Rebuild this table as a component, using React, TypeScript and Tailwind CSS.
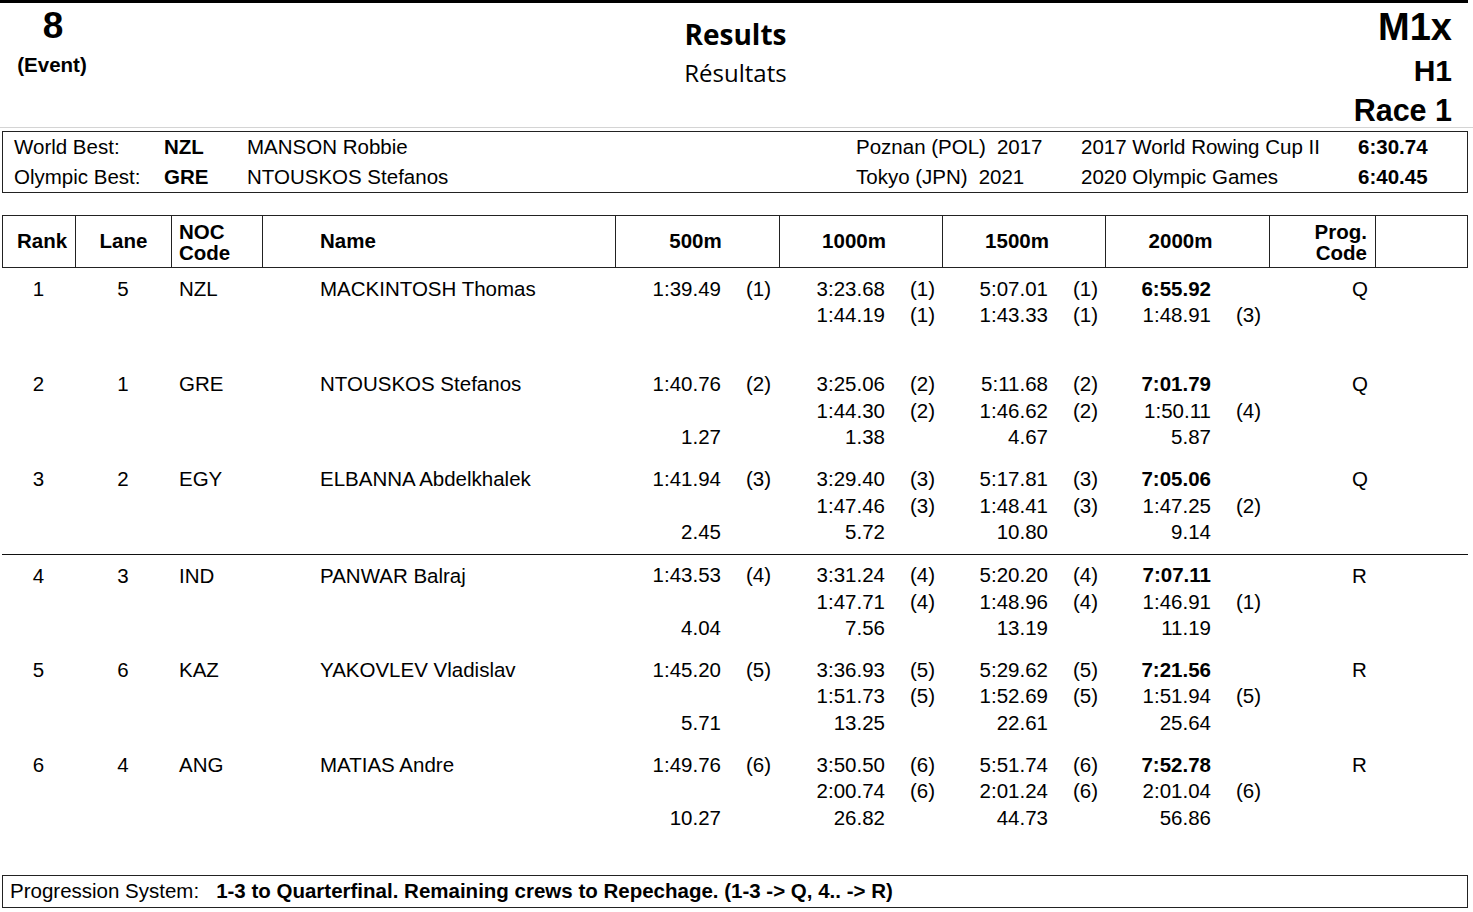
import React from 'react';

type Split = { time: string; rank?: string };
type Row = {
  rank: string;
  lane: string;
  noc: string;
  name: string;
  splits: [Split, Split, Split, Split];
  inter: [Split | null, Split, Split, Split];
  behind: [string, string, string, string];
  prog: string;
};

const rows: Row[] = [
  {
    rank: '1', lane: '5', noc: 'NZL', name: 'MACKINTOSH Thomas',
    splits: [{ time: '1:39.49', rank: '(1)' }, { time: '3:23.68', rank: '(1)' }, { time: '5:07.01', rank: '(1)' }, { time: '6:55.92' }],
    inter: [null, { time: '1:44.19', rank: '(1)' }, { time: '1:43.33', rank: '(1)' }, { time: '1:48.91', rank: '(3)' }],
    behind: ['', '', '', ''],
    prog: 'Q',
  },
  {
    rank: '2', lane: '1', noc: 'GRE', name: 'NTOUSKOS Stefanos',
    splits: [{ time: '1:40.76', rank: '(2)' }, { time: '3:25.06', rank: '(2)' }, { time: '5:11.68', rank: '(2)' }, { time: '7:01.79' }],
    inter: [null, { time: '1:44.30', rank: '(2)' }, { time: '1:46.62', rank: '(2)' }, { time: '1:50.11', rank: '(4)' }],
    behind: ['1.27', '1.38', '4.67', '5.87'],
    prog: 'Q',
  },
  {
    rank: '3', lane: '2', noc: 'EGY', name: 'ELBANNA Abdelkhalek',
    splits: [{ time: '1:41.94', rank: '(3)' }, { time: '3:29.40', rank: '(3)' }, { time: '5:17.81', rank: '(3)' }, { time: '7:05.06' }],
    inter: [null, { time: '1:47.46', rank: '(3)' }, { time: '1:48.41', rank: '(3)' }, { time: '1:47.25', rank: '(2)' }],
    behind: ['2.45', '5.72', '10.80', '9.14'],
    prog: 'Q',
  },
  {
    rank: '4', lane: '3', noc: 'IND', name: 'PANWAR Balraj',
    splits: [{ time: '1:43.53', rank: '(4)' }, { time: '3:31.24', rank: '(4)' }, { time: '5:20.20', rank: '(4)' }, { time: '7:07.11' }],
    inter: [null, { time: '1:47.71', rank: '(4)' }, { time: '1:48.96', rank: '(4)' }, { time: '1:46.91', rank: '(1)' }],
    behind: ['4.04', '7.56', '13.19', '11.19'],
    prog: 'R',
  },
  {
    rank: '5', lane: '6', noc: 'KAZ', name: 'YAKOVLEV Vladislav',
    splits: [{ time: '1:45.20', rank: '(5)' }, { time: '3:36.93', rank: '(5)' }, { time: '5:29.62', rank: '(5)' }, { time: '7:21.56' }],
    inter: [null, { time: '1:51.73', rank: '(5)' }, { time: '1:52.69', rank: '(5)' }, { time: '1:51.94', rank: '(5)' }],
    behind: ['5.71', '13.25', '22.61', '25.64'],
    prog: 'R',
  },
  {
    rank: '6', lane: '4', noc: 'ANG', name: 'MATIAS Andre',
    splits: [{ time: '1:49.76', rank: '(6)' }, { time: '3:50.50', rank: '(6)' }, { time: '5:51.74', rank: '(6)' }, { time: '7:52.78' }],
    inter: [null, { time: '2:00.74', rank: '(6)' }, { time: '2:01.24', rank: '(6)' }, { time: '2:01.04', rank: '(6)' }],
    behind: ['10.27', '26.82', '44.73', '56.86'],
    prog: 'R',
  },
];

const cols = 'grid grid-cols-[73px_96px_91px_353px_164px_163px_163px_164px_106px_93px]';

function SplitLine({ s, bold }: { s: Split | null; bold?: boolean }) {
  return (
    <div className="flex h-[26.5px] items-center">
      <span className={`w-[106px] text-right ${bold ? 'font-bold' : ''}`}>{s?.time ?? ''}</span>
      <span className="ml-[25px]">{s?.rank ?? ''}</span>
    </div>
  );
}

function ResultRow({ row, divider }: { row: Row; divider: boolean }) {
  return (
    <div className={`${cols} h-[95.2px] pt-[8px] ${divider ? 'border-t-[1.5px] border-[#111]' : ''}`}>
      <div className="h-[26.5px] text-center leading-[26.5px]">{row.rank}</div>
      <div className="h-[26.5px] text-center leading-[26.5px]">{row.lane}</div>
      <div className="h-[26.5px] pl-[8px] leading-[26.5px]">{row.noc}</div>
      <div className="h-[26.5px] pl-[58px] leading-[26.5px]">{row.name}</div>
      {[0, 1, 2, 3].map((i) => (
        <div key={i}>
          <SplitLine s={row.splits[i]} bold={i === 3} />
          <SplitLine s={row.inter[i]} />
          <div className="flex h-[26.5px] items-center">
            <span className="w-[106px] text-right">{row.behind[i]}</span>
          </div>
        </div>
      ))}
      <div className="h-[26.5px] pl-[83px] leading-[26.5px]">{row.prog}</div>
      <div />
    </div>
  );
}

export default function App() {
  return (
    <div className="w-[1473px] h-[912px] bg-white text-black font-['Liberation_Sans',Arial,sans-serif] text-[20.5px] overflow-hidden">
      <div className="h-[3px] bg-black mr-[5px]" />
      {/* title block */}
      <div className="flex h-[125px] border-b border-[#d4d4d4]">
        <div className="w-[104px] flex flex-col items-center">
          <div className="text-[37px] font-bold leading-[44px] mt-[1px] pl-[2px]">8</div>
          <div className="text-[20.5px] font-bold leading-[24px] mt-[5px]">(Event)</div>
        </div>
        <div className="flex-1 flex flex-col items-center pt-[13px] pl-[154px] font-['Open_Sans','Noto_Sans',sans-serif]">
          <div className="text-[28px] font-bold leading-[36px]">Results</div>
          <div className="text-[24px] leading-[40px] mt-[1px]">Résultats</div>
        </div>
        <div className="w-[260px] flex flex-col items-end pr-[21px] font-bold">
          <div className="text-[38px] leading-[44px] mt-[2px]">M1x</div>
          <div className="text-[30px] leading-[38px] mt-[3px]">H1</div>
          <div className="text-[30.5px] leading-[38px] mt-[1px]">Race 1</div>
        </div>
      </div>

      {/* best times */}
      <div className="mx-[2px] mt-[3px] w-[1466px] h-[62px] border border-[#222]">
        {[
          ['World Best:', 'NZL', 'MANSON Robbie', 'Poznan (POL)', '2017', '2017 World Rowing Cup II', '6:30.74'],
          ['Olympic Best:', 'GRE', 'NTOUSKOS Stefanos', 'Tokyo (JPN)', '2021', '2020 Olympic Games', '6:40.45'],
        ].map((r) => (
          <div key={r[0]} className="flex h-[30px] items-center">
            <span className="w-[161px] pl-[11px]">{r[0]}</span>
            <span className="w-[83px] font-bold">{r[1]}</span>
            <span className="w-[609px]">{r[2]}</span>
            <span className="w-[225px]">
              {r[3]}
              <span className="ml-[11px]">{r[4]}</span>
            </span>
            <span className="w-[277px]">{r[5]}</span>
            <span className="font-bold">{r[6]}</span>
          </div>
        ))}
      </div>

      {/* table */}
      <div className="mx-[2px] mt-[22px] w-[1466px]">
        <div className={`${cols} h-[53px] border border-[#222] font-bold`}>
          <div className="flex items-center justify-center pl-[6px] border-r border-[#222]">Rank</div>
          <div className="flex items-center justify-center border-r border-[#222]">Lane</div>
          <div className="flex flex-col justify-center pl-[7px] leading-[21px] border-r border-[#222]">
            <span>NOC</span>
            <span>Code</span>
          </div>
          <div className="flex items-center pl-[57px] border-r border-[#222]">Name</div>
          <div className="flex items-center justify-center pr-[4px] border-r border-[#222]">500m</div>
          <div className="flex items-center justify-center pr-[14px] border-r border-[#222]">1000m</div>
          <div className="flex items-center justify-center pr-[14px] border-r border-[#222]">1500m</div>
          <div className="flex items-center justify-center pr-[14px] border-r border-[#222]">2000m</div>
          <div className="flex flex-col items-end justify-center pr-[8px] leading-[21px] border-r border-[#222]">
            <span>Prog.</span>
            <span>Code</span>
          </div>
          <div />
        </div>
        {rows.map((row, i) => (
          <ResultRow key={row.rank} row={row} divider={i === 3} />
        ))}
      </div>

      {/* footer */}
      <div className="mx-[2px] mt-[36px] w-[1466px] h-[33px] border border-[#222] flex items-center pl-[7px]">
        <span>Progression System:</span>
        <span className="ml-[17px] font-bold">1-3 to Quarterfinal. Remaining crews to Repechage. (1-3 -&gt; Q, 4.. -&gt; R)</span>
      </div>
    </div>
  );
}
